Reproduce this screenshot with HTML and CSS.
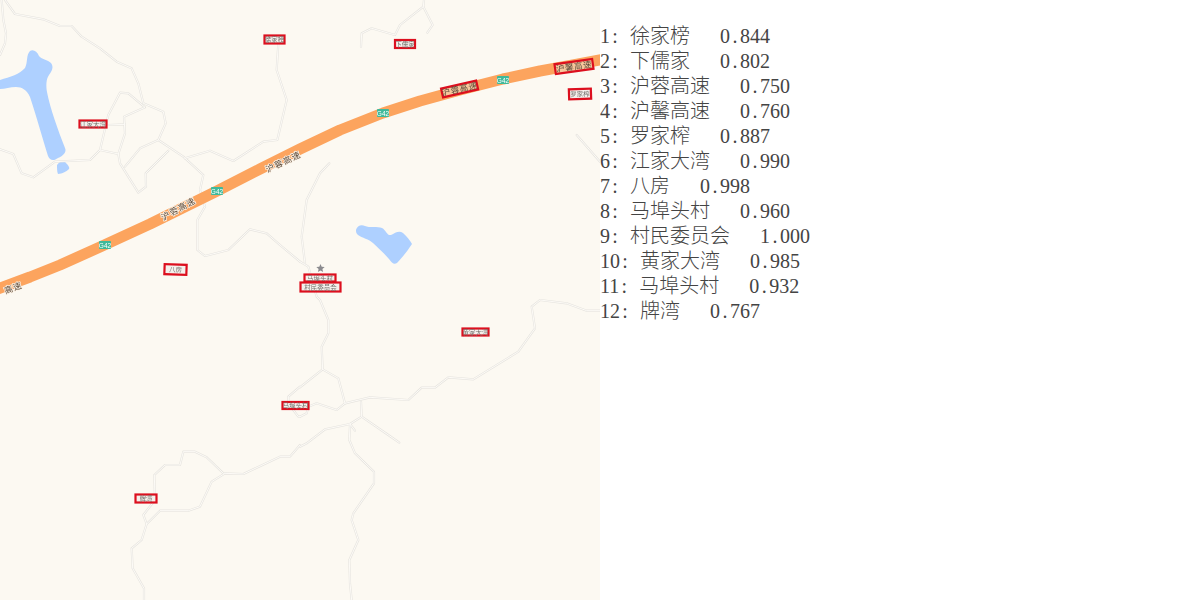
FILE: index.html
```
<!DOCTYPE html>
<html lang="zh">
<head>
<meta charset="utf-8">
<title>OCR</title>
<link rel="stylesheet" href="styles.css">
</head>
<body>
<div class="page">
<svg class="map" width="600" height="600" viewBox="0 0 600 600" xmlns="http://www.w3.org/2000/svg">
  <defs>
    <g id="roads">
      <g transform="scale(.33333)">
        <polyline points="15,0 45,42 130,58 180,78 215,78 245,110 300,145 350,185 395,205 415,250 430,310 490,335 497,370 475,420 550,470 610,525 600,570 615,620 592,660 592,750 615,768 685,750 750,688 800,700 840,735 900,785"/>
        <polyline points="555,475 630,452 700,483 790,425 832,420 860,300 830,210 835,130"/>
        <polyline points="0,448 40,462 65,520 100,532 165,485 270,480 300,450 355,462 375,400 372,350 435,322 385,280 360,278 325,345 300,450"/>
        <polyline points="355,462 360,490 415,578 438,560 437,520 505,452"/>
        <polyline points="375,500 420,445 475,420"/>
        <polyline points="325,375 375,373"/>
        <polyline points="5,0 10,60 18,100 15,130 0,165"/>
      </g>
      <g transform="translate(300,0) scale(.33333)">
        <polyline points="372,0 370,20 300,75 285,105 215,85 185,100 183,140"/>
        <polyline points="370,20 398,75 382,98"/>
        <polyline points="88,490 60,520 20,600 5,710 15,790"/>
        <polyline points="830,405 900,485"/>
        <polyline points="0,785 25,800 50,890 60,900"/>
      </g>
      <g transform="translate(300,300) scale(.33333)">
        <polyline points="60,0 85,60 85,100 65,140 68,208 115,235 135,310 210,292 325,300 365,263 405,263 445,232 520,238 655,155 705,85 695,20 720,0 800,10 860,32 900,32"/>
        <polyline points="68,208 0,262"/>
        <polyline points="135,310 110,330 50,310 25,320 20,340 0,350"/>
        <polyline points="183,305 185,350 150,372 75,388 20,430 0,440"/>
        <polyline points="185,350 265,405 298,428"/>
        <polyline points="150,372 165,392"/>
        <polyline points="150,375 148,420 165,460 222,515 222,550 160,640 155,660 175,720 148,780 150,850 155,900"/>
      </g>
      <g transform="translate(0,300) scale(.33333)">
        <polyline points="900,260 865,290 865,310 880,330 895,350 900,350"/>
        <polyline points="900,435 870,470 840,470 730,522 675,520 635,545 600,620 565,632 480,632 440,672 425,720 395,745 398,805 432,865 432,900"/>
        <polyline points="670,520 620,472 585,455 550,455 540,495 495,495 463,525 465,600 430,645 440,672"/>
      </g>
    </g>
  </defs>

  <rect class="land" width="600" height="600"/>
  <path class="water" d="M0 80 C10 77 20 74 25 68 C28 62 26 55 30 51 C33 49 37 51 39 56 C41 59 48 60 51 63 C54 67 52 71 49 75 C46 79 46 86 47 92 C50 108 58 130 65 148 C67 152 63 156 58 158 C54 161 50 161 48 156 C43 140 36 115 30 97 C27 90 22 87 16 87 C10 87 5 89 0 89 Z"/>
  <path class="water" d="M57 165 C60 161 63 160 65 162 C67 164 70 167 69 169 C67 171 62 174 58 174 C57 172 57 168 57 165 Z"/>
  <path class="water" d="M356 230 C357 226 361 224 365 226 C369 228 378 226 382 228 C386 230 387 236 391 235 C395 233 399 230 403 233 C407 237 410 240 412 244 C408 250 402 258 397 263 C394 265 392 263 389 259 C384 253 378 248 373 243 C369 239 362 238 358 235 C356 233 356 232 356 230 Z"/>

  <use href="#roads" class="road-casing"/>
  <use href="#roads" class="road-fill"/>

  <polyline class="highway" points="-5,290 30,277 60,265 100,247 150,224 217,191 260,169 300,149 340,130 383,113 420,101 460,90 503,79 540,71 573,65 605,59"/>

  <text class="road-name" transform="translate(178,208) rotate(-29)">沪蓉高速</text>
  <text class="road-name" transform="translate(283,161) rotate(-25)">沪蓉高速</text>
  <text class="road-name" transform="translate(13,287) rotate(-20)">高速</text>

  <g class="shield" transform="translate(105,245)"><rect x="-6" y="-4" width="12" height="8" rx="1"/><text y="2.5">G42</text></g>
  <g class="shield" transform="translate(217,191)"><rect x="-6" y="-4" width="12" height="8" rx="1"/><text y="2.5">G42</text></g>
  <g class="shield" transform="translate(383,113)"><rect x="-6" y="-4" width="12" height="8" rx="1"/><text y="2.5">G42</text></g>
  <g class="shield" transform="translate(503,80)"><rect x="-6" y="-4" width="12" height="8" rx="1"/><text y="2.5">G42</text></g>

  <polygon class="star" points="320.5,264 321.7,266.8 324.7,267 322.4,269 323.1,272 320.5,270.4 317.9,272 318.6,269 316.3,267 319.3,266.8"/>

  <g class="tag" transform="translate(274.5,39.5)"><rect x="-10" y="-4" width="20" height="8"/><text y="2.5">徐家榜</text></g>
  <g class="tag" transform="translate(405,44)"><rect x="-10" y="-4" width="20" height="8"/><text y="2.5">下儒家</text></g>
  <g class="tag tag-road" transform="translate(459.6,89) rotate(-13)"><rect x="-18" y="-4.5" width="36" height="9"/><text y="3">沪蓉高速</text></g>
  <g class="tag tag-road" transform="translate(574,66.5) rotate(-8)"><rect x="-19" y="-5" width="38" height="10"/><text y="3">沪馨高速</text></g>
  <g class="tag" transform="translate(580,94) rotate(-2)"><rect x="-11" y="-5" width="22" height="10"/><text y="2.5">罗家榨</text></g>
  <g class="tag" transform="translate(93,124)"><rect x="-13.5" y="-3.5" width="27" height="7"/><text y="2.5">江家大湾</text></g>
  <g class="tag" transform="translate(175.5,269.5) rotate(2)"><rect x="-11" y="-5" width="22" height="10"/><text y="2.5">八房</text></g>
  <g class="tag" transform="translate(320,278)"><rect x="-15.5" y="-3.5" width="31" height="7"/><text y="3">马埠头村</text></g>
  <g class="tag" transform="translate(320.5,287)"><rect x="-20" y="-4.5" width="40" height="9"/><text y="3">村民委员会</text></g>
  <g class="tag" transform="translate(475.5,332)"><rect x="-13" y="-3.5" width="26" height="7"/><text y="2.5">黄家大湾</text></g>
  <g class="tag" transform="translate(295.5,405.5)"><rect x="-13" y="-3.5" width="26" height="7"/><text y="2.5">马埠头村</text></g>
  <g class="tag" transform="translate(146,498.5)"><rect x="-10.5" y="-4" width="21" height="8"/><text y="2.5">牌湾</text></g>
</svg>
<div class="results">
  <p>1<b>:</b> 徐家榜   0<b>.</b>844</p>
  <p>2<b>:</b> 下儒家   0<b>.</b>802</p>
  <p>3<b>:</b> 沪蓉高速   0<b>.</b>750</p>
  <p>4<b>:</b> 沪馨高速   0<b>.</b>760</p>
  <p>5<b>:</b> 罗家榨   0<b>.</b>887</p>
  <p>6<b>:</b> 江家大湾   0<b>.</b>990</p>
  <p>7<b>:</b> 八房   0<b>.</b>998</p>
  <p>8<b>:</b> 马埠头村   0<b>.</b>960</p>
  <p>9<b>:</b> 村民委员会   1<b>.</b>000</p>
  <p>10<b>:</b> 黄家大湾   0<b>.</b>985</p>
  <p>11<b>:</b> 马埠头村   0<b>.</b>932</p>
  <p>12<b>:</b> 牌湾   0<b>.</b>767</p>
</div>
</div>
</body>
</html>
```
FILE: styles.css
```
html, body {
  margin: 0;
  padding: 0;
  background: #fff;
}
.page {
  display: flex;
  width: 1200px;
  height: 600px;
  overflow: hidden;
}
.map {
  display: block;
  flex: 0 0 600px;
  filter: blur(0.3px);
}
.land { fill: #fcf9f2; }
.water { fill: #aed0ff; }
.road-casing, .road-fill {
  fill: none;
  stroke-linejoin: round;
  stroke-linecap: round;
}
.road-casing { stroke: #e6e4df; stroke-width: 6.5; }
.road-fill { stroke: #fdfbf7; stroke-width: 3; }
.highway {
  fill: none;
  stroke: #fca45e;
  stroke-width: 11;
  stroke-linejoin: round;
}
.road-name {
  font: 8.5px "Noto Sans CJK SC", sans-serif;
  fill: #5c4a3a;
  stroke: #fdf3e6;
  stroke-width: 1.5px;
  paint-order: stroke;
  text-anchor: middle;
  letter-spacing: 1px;
  dominant-baseline: central;
}
.shield rect { fill: #3fb99a; }
.shield text {
  font: 6.5px "Liberation Sans", sans-serif;
  fill: #fff;
  text-anchor: middle;
}
.star { fill: #8a8a8e; }
.tag rect {
  fill: #f4f0ec;
  stroke: #dc0f1e;
  stroke-width: 2.2;
}
.tag text {
  font: 6.5px "Noto Sans CJK SC", sans-serif;
  fill: #77726e;
  text-anchor: middle;
}
.tag-road rect { fill: #f6c79c; }
.tag-road text {
  font-size: 8.5px;
  fill: #5c4a3a;
  letter-spacing: .6px;
}
.results {
  flex: 1;
  padding-top: 24px;
  background: #fff;
}
.results p {
  margin: 0;
  height: 25px;
  line-height: 25px;
  font-family: "Liberation Serif", "Noto Sans CJK SC", serif;
  font-size: 20px;
  font-weight: 300;
  color: #444;
  white-space: pre;
  word-spacing: 5px;
}
.results b {
  display: inline-block;
  width: 10px;
  font-weight: 400;
  text-align: center;
}
```
